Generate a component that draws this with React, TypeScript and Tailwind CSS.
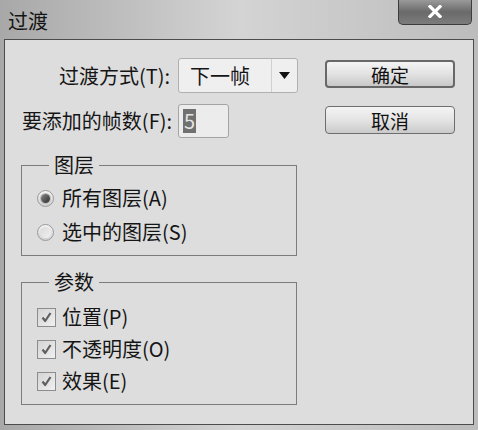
import React from "react";

const font = "font-['Noto_Sans_CJK_SC','Noto_Sans',sans-serif]";

const Radio: React.FC<{ checked?: boolean; label: string }> = ({ checked, label }) => (
  <label className="flex h-[34px] items-center gap-[8px]">
    <span className="flex h-[17px] w-[17px] items-center justify-center rounded-full border border-[#9a9a9a] bg-gradient-to-b from-[#f4f4f4] to-[#d0d0d0]">
      {checked ? (
        <span className="h-[9px] w-[9px] rounded-full bg-gradient-to-br from-[#8a8a8a] to-[#2e2e2e] shadow-[0_0_0_1px_#bdbdbd]" />
      ) : (
        <span className="h-[11px] w-[11px] rounded-full bg-gradient-to-br from-[#dadada] to-[#f0f0f0]" />
      )}
    </span>
    <span>{label}</span>
  </label>
);

const Check: React.FC<{ label: string }> = ({ label }) => (
  <label className="flex h-[32px] items-center gap-[6px]">
    <span className="flex h-[19px] w-[19px] items-center justify-center border border-[#8c8c8c] bg-gradient-to-br from-[#d4d4d4] to-[#f0f0f0]">
      <svg width="13" height="13" viewBox="0 0 13 13">
        <path d="M2.5 6.5 L5.2 10 L10.5 2" fill="none" stroke="#5e5e5e" strokeWidth="2.2" strokeLinejoin="round" />
      </svg>
    </span>
    <span>{label}</span>
  </label>
);

const Button: React.FC<{ label: string; primary?: boolean }> = ({ label, primary }) => (
  <button
    className={
      primary
        ? "flex h-[28px] w-[130px] items-center justify-center rounded-[4px] border-2 border-[#686868] bg-gradient-to-b from-[#f4f4f4] via-[#e2e2e2] to-[#c8c8c8] text-[19px] leading-none text-[#111]"
        : "flex h-[28px] w-[130px] items-center justify-center rounded-[4px] border border-[#6e6e6e] bg-gradient-to-b from-[#f4f4f4] via-[#e4e4e4] to-[#cacaca] text-[19px] leading-none text-[#111]"
    }
  >
    {label}
  </button>
);

export default function App() {
  return (
    <div className={`${font} flex h-[430px] w-[478px] flex-col bg-gradient-to-r from-[#a8a8a8] via-[#d4d4d4] to-[#bcbcbc] text-[#151515]`}>
      <div className="flex h-[39px] items-start justify-between pl-[8px] pr-[6px]">
        <span className="mt-[9px] text-[20px] leading-[24px]">过渡</span>
        <div className="flex h-[25px] w-[74px] items-center justify-center rounded-b-[5px] border border-t-0 border-[#3c3c3c] bg-gradient-to-b from-[#9a9a9a] via-[#6a6a6a] to-[#7c7c7c]">
          {/* close glyph */}
          <svg width="14" height="13" viewBox="0 0 14 13" className="-mt-[2px]">
            <path d="M2 1.5 L12 11.5 M12 1.5 L2 11.5" stroke="#ffffff" strokeWidth="3.2" strokeLinecap="square" />
          </svg>
        </div>
      </div>
      <div className="mx-[4px] mb-[5px] flex flex-1 border border-[#4c4c4c] bg-[#dddddd] text-[20px] leading-[24px]">
        <div className="flex w-[300px] flex-col">
          <div className="mt-[18px] flex h-[35px] items-center">
            <span className="w-[165px] text-right">过渡方式(T):</span>
            <div className="ml-[8px] flex h-[35px] w-[120px] items-center rounded-[3px] border border-[#b0b0b0] bg-[#efefef]">
              <span className="flex-1 pl-[11px]">下一帧</span>
              <span className="flex h-full w-[26px] items-center justify-center border-l border-[#d0d0d0]">
                <svg width="11" height="7" viewBox="0 0 11 7">
                  <path d="M0 0 H11 L5.5 7 Z" fill="#111" />
                </svg>
              </span>
            </div>
          </div>
          <div className="mt-[11px] flex h-[34px] items-center">
            <span className="w-[167px] text-right">要添加的帧数(F):</span>
            <div className="ml-[6px] flex h-[34px] w-[51px] items-center rounded-[3px] border border-[#a4a4a4] bg-[#ececec] pl-[4px]">
              <span className="bg-[#707070] px-[1px] text-[#e4e4e4]">5</span>
            </div>
          </div>
          <fieldset className="ml-[16px] mt-[15px] w-[276px] border border-[#7c7c7c] px-[15px] pb-[6px] pt-[4px]">
            <legend className="ml-[12px] px-[5px]">图层</legend>
            <Radio checked label="所有图层(A)" />
            <Radio label="选中的图层(S)" />
          </fieldset>
          <fieldset className="ml-[16px] mt-[14px] w-[276px] border border-[#7c7c7c] px-[15px] pb-[7px] pt-[7px]">
            <legend className="ml-[12px] px-[5px]">参数</legend>
            <Check label="位置(P)" />
            <Check label="不透明度(O)" />
            <Check label="效果(E)" />
          </fieldset>
        </div>
        <div className="ml-[20px] flex flex-col">
          <div className="mt-[20px]">
            <Button primary label="确定" />
          </div>
          <div className="mt-[18px]">
            <Button label="取消" />
          </div>
        </div>
      </div>
    </div>
  );
}
